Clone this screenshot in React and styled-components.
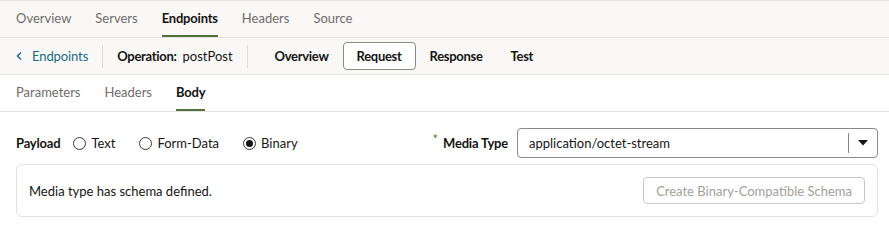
import React from "react";
import styled, { createGlobalStyle } from "styled-components";

const GlobalStyle = createGlobalStyle`
  *, *::before, *::after { box-sizing: border-box; }
  body {
    margin: 0;
    background: #ffffff;
    font-family: Lato, "Noto Sans", sans-serif;
    font-size: 13px;
    color: #161513;
  }
`;

const topTabs = ["Overview", "Servers", "Endpoints", "Headers", "Source"];
const opTabs = ["Overview", "Request", "Response", "Test"];
const bodyTabs = ["Parameters", "Headers", "Body"];
const payloads = ["Text", "Form-Data", "Binary"];

const TabBar = styled.div`
  display: flex;
  align-items: stretch;
  height: ${(p) => (p.$topLine ? 38 : 37)}px;
  padding: 0 16px;
  gap: 24px;
  background: ${(p) => (p.$tinted ? "#f9f8f6" : "#ffffff")};
  border-top: ${(p) => (p.$topLine ? "1px solid #e4e2df" : "none")};
  border-bottom: 1px solid #e4e2df;
`;

const Tab = styled.div`
  display: flex;
  align-items: center;
  font-weight: ${(p) => (p.$active ? 700 : 400)};
  letter-spacing: ${(p) => (p.$active ? "-0.2px" : "0")};
  color: ${(p) => (p.$active ? "#161513" : "#6f6c69")};
  border-bottom: 2px solid ${(p) => (p.$active ? "#51733b" : "transparent")};
`;

const OpBar = styled.div`
  display: flex;
  align-items: center;
  height: 37px;
  padding: 0 16px;
  background: #f9f8f6;
  border-bottom: 1px solid #e4e2df;
`;

const BackLink = styled.a`
  display: flex;
  align-items: center;
  gap: 10px;
  color: #1c6a85;
  text-decoration: none;
  letter-spacing: -0.1px;
  cursor: pointer;
`;

const Divider = styled.span`
  width: 1px;
  height: 23px;
  background: #dedcd9;
  margin: 0 14px;
`;

const OpLabel = styled.span`
  font-weight: 700;
  letter-spacing: -0.3px;
  margin-right: 6px;
`;

const OpTabs = styled.div`
  display: flex;
  align-items: center;
  margin-left: -1px;
`;

const OpTab = styled.button`
  font: inherit;
  font-weight: 700;
  letter-spacing: -0.3px;
  color: #161513;
  background: ${(p) => (p.$active ? "#ffffff" : "transparent")};
  border: 1px solid ${(p) => (p.$active ? "#8d8a86" : "transparent")};
  border-radius: 4px;
  height: 28px;
  padding: 0 13px;
`;

const Content = styled.div`
  padding: 16px 11px 0 16px;
`;

const FormRow = styled.div`
  display: flex;
  align-items: center;
  height: 30px;
`;

const FieldLabel = styled.span`
  font-weight: 700;
  letter-spacing: -0.2px;
  margin-right: ${(p) => p.$gap || 12}px;
`;

const RadioGroup = styled.div`
  display: flex;
  align-items: center;
  gap: 24px;
  flex: 1;
`;

const RadioOption = styled.label`
  display: flex;
  align-items: center;
  gap: 5px;
  color: #161513;
`;

const RadioCircle = styled.span`
  width: 13px;
  height: 13px;
  border-radius: 50%;
  border: 1px solid #3a3937;
  display: flex;
  align-items: center;
  justify-content: center;
  &::after {
    content: "";
    width: 7px;
    height: 7px;
    border-radius: 50%;
    background: ${(p) => (p.$checked ? "#161513" : "transparent")};
  }
`;

const Required = styled.span`
  color: #4f7a3a;
  font-size: 13px;
  line-height: 1;
  align-self: flex-start;
  margin-top: 5px;
  margin-right: 5px;
`;

const Select = styled.div`
  display: flex;
  align-items: center;
  width: 361px;
  height: 30px;
  border: 1px solid #8d8a86;
  border-radius: 4px;
  background: #ffffff;
`;

const SelectValue = styled.span`
  flex: 1;
  padding-left: 11px;
`;

const SelectArrow = styled.span`
  display: flex;
  align-items: center;
  justify-content: center;
  width: 29px;
  height: 20px;
  border-left: 1px solid #8d8a86;
`;

const Card = styled.div`
  display: flex;
  align-items: center;
  justify-content: space-between;
  margin-top: 6px;
  height: 53px;
  padding: 0 12px 0 12px;
  border: 1px solid #e4e2df;
  border-radius: 6px;
`;

const DisabledButton = styled.button`
  font: inherit;
  color: #a3a09c;
  background: #ffffff;
  border: 1px solid #c9c7c4;
  border-radius: 4px;
  height: 27px;
  padding: 0 12px;
`;

export default function App() {
  return (
    <>
      <GlobalStyle />
      <TabBar $tinted $topLine>
        {topTabs.map((t) => (
          <Tab key={t} $active={t === "Endpoints"}>
            {t}
          </Tab>
        ))}
      </TabBar>
      <OpBar>
        <BackLink>
          <svg width="6" height="10" viewBox="0 0 6 10">
            <path d="M5 1.5 L1.5 5 L5 8.5" fill="none" stroke="#1c6a85" strokeWidth="1.5" />
          </svg>
          Endpoints
        </BackLink>
        <Divider />
        <OpLabel>Operation:</OpLabel>
        <span>postPost</span>
        <Divider />
        <OpTabs>
          {opTabs.map((t) => (
            <OpTab key={t} $active={t === "Request"}>
              {t}
            </OpTab>
          ))}
        </OpTabs>
      </OpBar>
      <TabBar>
        {bodyTabs.map((t) => (
          <Tab key={t} $active={t === "Body"}>
            {t}
          </Tab>
        ))}
      </TabBar>
      <Content>
        <FormRow>
          <FieldLabel $gap={13}>Payload</FieldLabel>
          <RadioGroup>
            {payloads.map((p) => (
              <RadioOption key={p}>
                <RadioCircle $checked={p === "Binary"} />
                {p}
              </RadioOption>
            ))}
          </RadioGroup>
          <Required>*</Required>
          <FieldLabel $gap={9}>Media Type</FieldLabel>
          <Select>
            <SelectValue>application/octet-stream</SelectValue>
            <SelectArrow>
              <svg width="10" height="6" viewBox="0 0 10 6">
                <path d="M0 0 H10 L5 5.5 Z" fill="#161513" />
              </svg>
            </SelectArrow>
          </Select>
        </FormRow>
        <Card>
          <span>Media type has schema defined.</span>
          <DisabledButton disabled>Create Binary-Compatible Schema</DisabledButton>
        </Card>
      </Content>
    </>
  );
}
